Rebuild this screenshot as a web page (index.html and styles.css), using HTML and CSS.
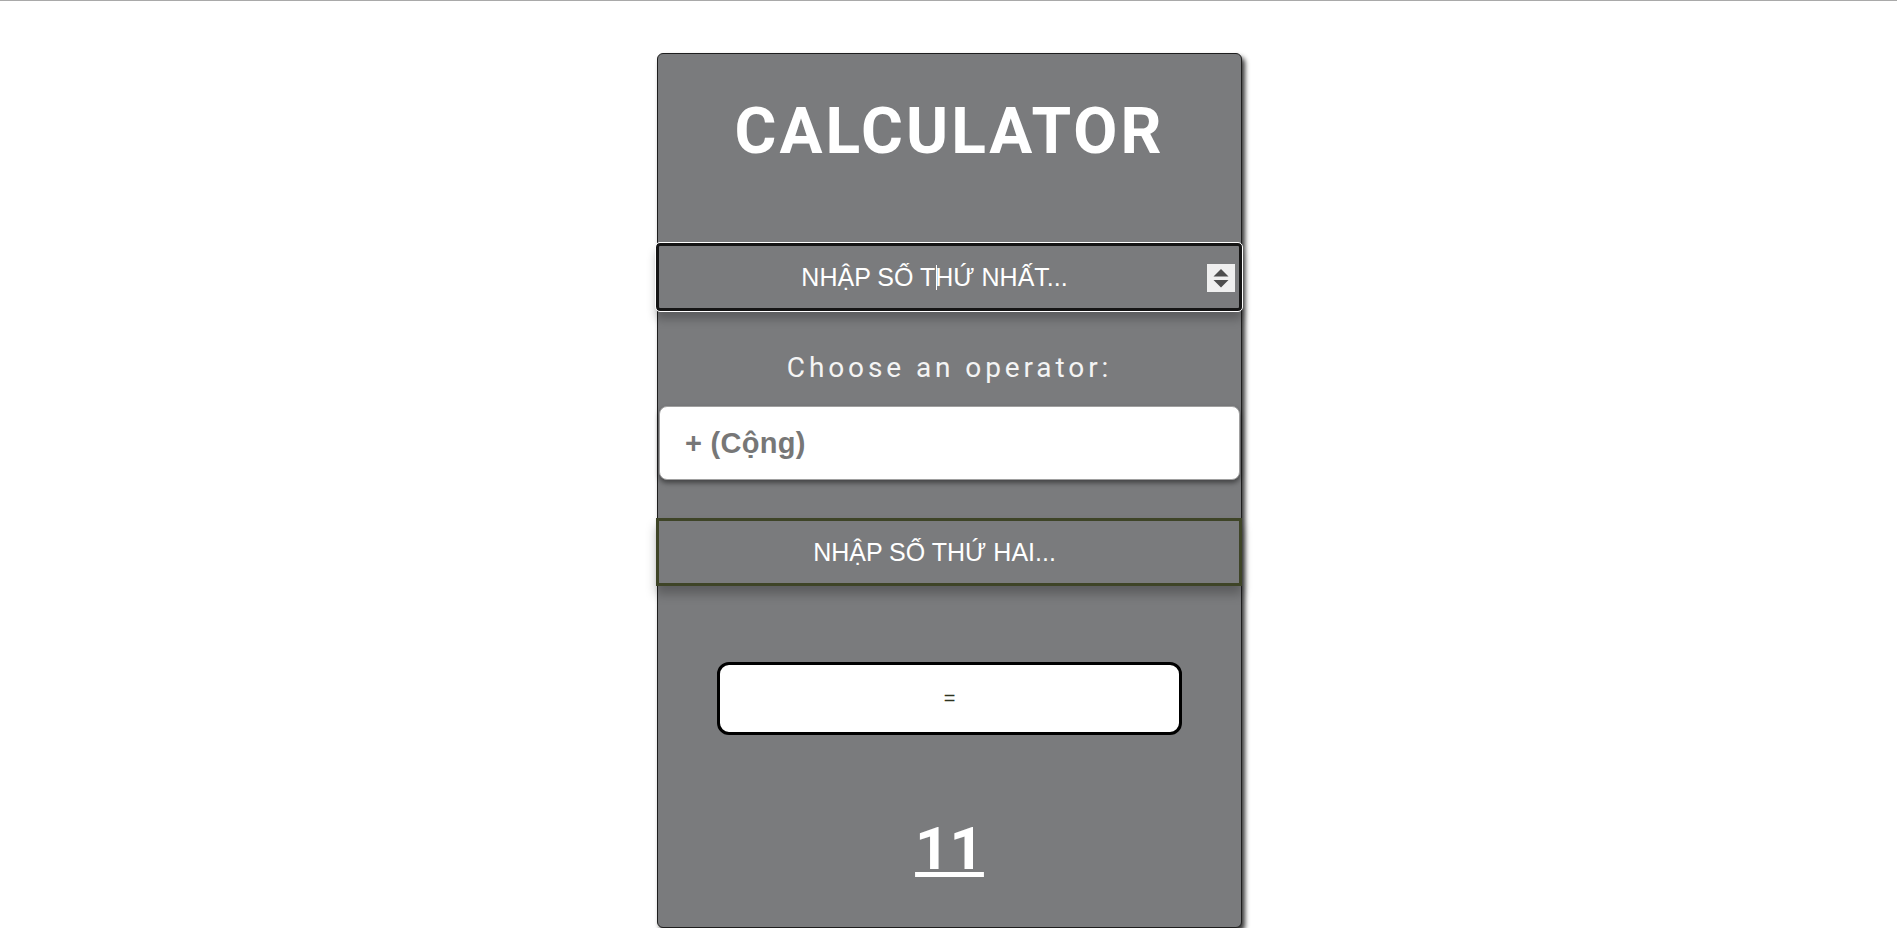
FILE: index.html
```html
<!DOCTYPE html>
<html lang="vi">
<head>
<meta charset="utf-8">
<title>Calculator</title>
<link rel="stylesheet" href="styles.css">
</head>
<body>
<div class="calc">
  <h1 class="calc-title">CALCULATOR</h1>
  <div class="field field-focus">
    <input class="num-input" type="text" placeholder="NHẬP SỐ THỨ NHẤT...">
    <span class="caret"></span>
    <span class="spinner">
      <svg width="28" height="28" viewBox="0 0 28 28"><path d="M14 5 L21.5 12.5 L6.5 12.5 Z" fill="#4d4d4d"/><path d="M6.5 16 L21.5 16 L14 23.5 Z" fill="#4d4d4d"/></svg>
    </span>
  </div>
  <p class="op-label">Choose an operator:</p>
  <select class="op-select">
    <option>+ (Cộng)</option>
    <option>- (Trừ)</option>
    <option>* (Nhân)</option>
    <option>/ (Chia)</option>
  </select>
  <div class="field">
    <input class="num-input num-input-plain" type="text" placeholder="NHẬP SỐ THỨ HAI...">
  </div>
  <button class="eq-btn" type="button">=</button>
  <h1 class="result">11</h1>
</div>
</body>
</html>
```

FILE: styles.css
```css
html {
  border-top: 1px solid #a9a9a9;
  background: #ffffff;
}
body {
  margin: 8px 8px 8px 10px;
  font-family: "Liberation Sans", Arial, sans-serif;
}
.calc {
  width: 583px;
  margin: 44px auto 0;
  background: #7a7b7d;
  border: 1px solid #1e1e1e;
  border-radius: 6px;
  box-shadow: 3px 4px 5px rgba(0, 0, 0, 0.8);
  display: flex;
  flex-direction: column;
  align-items: center;
  padding: 40px 0 41px;
}
.calc-title {
  margin: 0;
  font-family: Roboto, "Liberation Sans", sans-serif;
  font-weight: 700;
  font-size: 64px;
  line-height: 75px;
  letter-spacing: 3px;
  color: #ffffff;
  text-align: center;
}
.field {
  position: relative;
  align-self: stretch;
  margin: 74px -1px 0 -2px;
  height: 68px;
  box-shadow: 0 8px 10px rgba(0, 0, 0, 0.25);
}
.field-focus {
  border-radius: 4px;
  outline: 1px solid #ffffff;
}
.num-input {
  box-sizing: border-box;
  width: 100%;
  height: 100%;
  margin: 0;
  padding: 0 29px 0 0;
  background: #7a7b7d;
  border: 3px solid #151515;
  border-radius: 4px;
  color: #ffffff;
  font-family: "Liberation Sans", Arial, sans-serif;
  font-size: 25px;
  text-align: center;
  outline: none;
}
.num-input::placeholder {
  color: #ffffff;
  opacity: 1;
}
.num-input-plain {
  border-color: #3e4427;
  border-radius: 0;
}
.caret {
  position: absolute;
  left: 280px;
  top: 22px;
  width: 1px;
  height: 25px;
  background: #ffffff;
}
.spinner {
  position: absolute;
  right: 7px;
  top: 21px;
  width: 28px;
  height: 28px;
  background: #efefef;
  display: flex;
}
.op-label {
  margin: 40px 0 0;
  font-family: Roboto, "Liberation Sans", sans-serif;
  font-size: 28px;
  line-height: 33px;
  letter-spacing: 3.9px;
  color: #f4f4f4;
}
.op-select {
  -webkit-appearance: none;
  appearance: none;
  align-self: stretch;
  box-sizing: border-box;
  margin: 22px 1px 0 1px;
  height: 74px;
  padding: 0 25px;
  background: #ffffff;
  border: 1px solid #a0a0a0;
  border-radius: 8px;
  box-shadow: 0 3px 5px rgba(0, 0, 0, 0.45);
  font-family: "Liberation Sans", Arial, sans-serif;
  font-weight: 700;
  font-size: 29px;
  letter-spacing: 0.3px;
  color: #777777;
  outline: none;
}
.op-select + .field {
  margin-top: 38px;
}
.eq-btn {
  box-sizing: border-box;
  width: 465px;
  height: 73px;
  margin: 76px 0 0;
  background: #ffffff;
  border: 3px solid #000000;
  border-radius: 12px;
  font-family: "Liberation Sans", Arial, sans-serif;
  font-size: 20px;
  color: #2e3320;
  cursor: pointer;
}
.result {
  margin: 76px 0 0;
  font-family: Roboto, "Liberation Sans", sans-serif;
  font-weight: 700;
  font-size: 60px;
  line-height: 75px;
  color: #ffffff;
  text-decoration: underline;
  text-decoration-thickness: 5px;
  text-underline-offset: 3px;
}
```
